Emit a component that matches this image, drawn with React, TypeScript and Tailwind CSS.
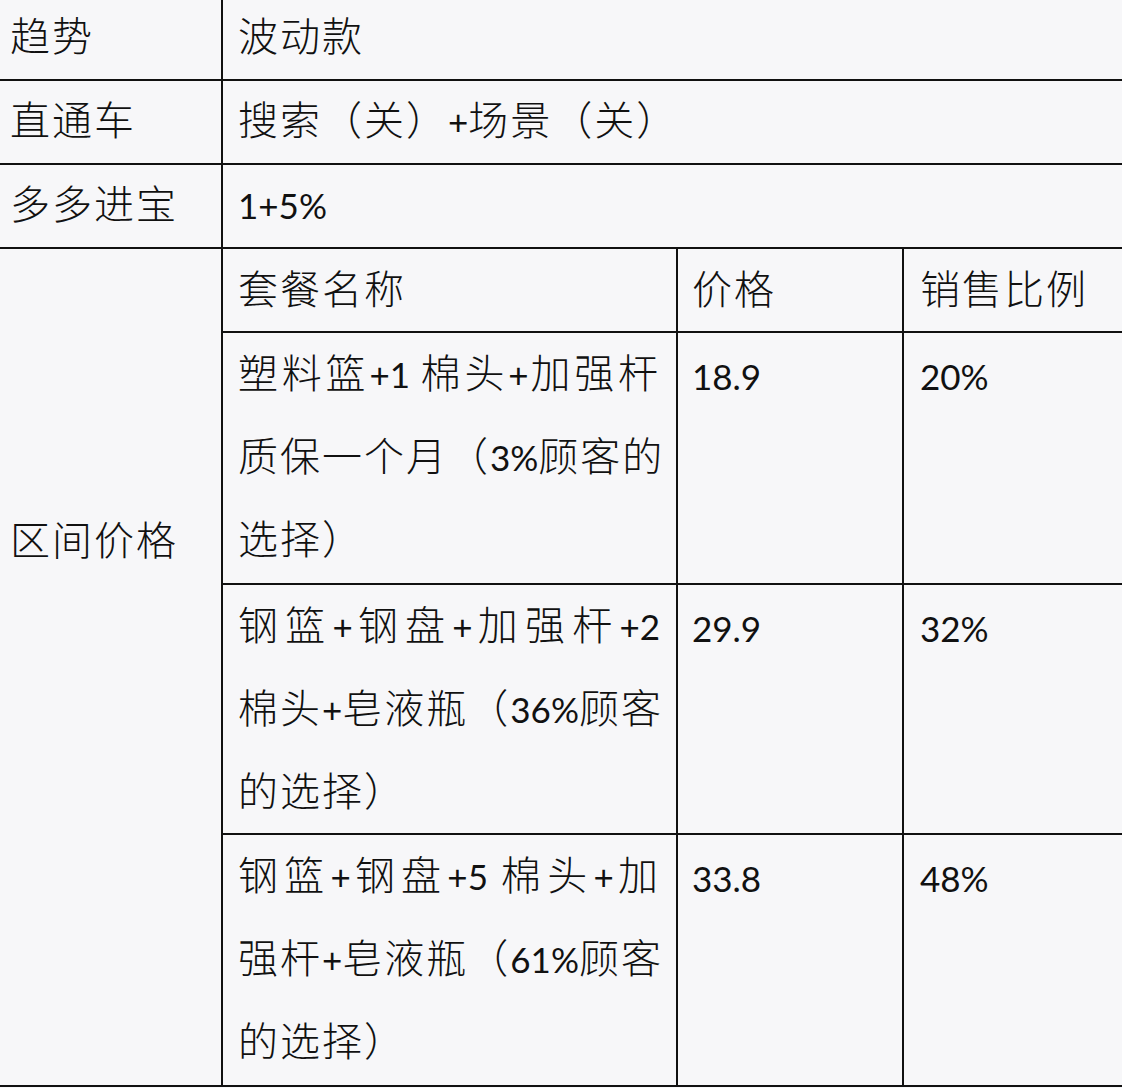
import React from 'react';

// Mixed Chinese / Latin text: Latin runs get a smaller Lato so they sit like Calibri does in Word
const CJK = /([\u3000-\u303f\u4e00-\u9fff\uff00-\uffef]+)/;

function Mixed({ text }: { text: string }) {
  const parts = text.split(CJK).filter((p) => p !== '');
  return (
    <>
      {parts.map((p, i) =>
        CJK.test(p) ? (
          <span key={i} className="tracking-[2px]">{p}</span>
        ) : (
          <span key={i} className="font-['Lato',sans-serif] text-[35px] font-normal">{p}</span>
        )
      )}
    </>
  );
}

// one cell of wrapped text; every line but the last is justified edge to edge
function Lines({ lines }: { lines: string[] }) {
  return (
    <div className="w-[422px] -mt-[3px]">
      {lines.map((l, i) => (
        <div
          key={i}
          className={`h-[83px] leading-[83px] whitespace-nowrap ${
            i < lines.length - 1 ? 'text-justify [text-align-last:justify]' : ''
          }`}
        >
          <Mixed text={l} />
        </div>
      ))}
    </div>
  );
}

const packages = [
  {
    lines: ['塑料篮+1 棉头+加强杆', '质保一个月（3%顾客的', '选择）'],
    price: '18.9',
    ratio: '20%',
  },
  {
    lines: ['钢篮+钢盘+加强杆+2', '棉头+皂液瓶（36%顾客', '的选择）'],
    price: '29.9',
    ratio: '32%',
  },
  {
    lines: ['钢篮+钢盘+5 棉头+加', '强杆+皂液瓶（61%顾客', '的选择）'],
    price: '33.8',
    ratio: '48%',
  },
];

export default function App() {
  const cell = 'bg-[#f7f7f9] overflow-hidden';

  return (
    <div className="w-[1122px] h-[1088px] bg-[#f7f7f9] overflow-hidden text-[#111] text-[40px] font-light font-['Noto_Sans_CJK_SC','Noto_Sans',sans-serif]">
      <div className="grid grid-cols-[221px_1fr] grid-rows-[79px_82px_82px_836px] gap-[2px] bg-[#111] pb-[2px]">
        <div className={`${cell} pl-[10px] leading-[68px]`}>
          <Mixed text="趋势" />
        </div>
        <div className={`${cell} pl-[15px] leading-[68px]`}>
          <Mixed text="波动款" />
        </div>

        <div className={`${cell} pl-[10px] leading-[74px]`}>
          <Mixed text="直通车" />
        </div>
        <div className={`${cell} pl-[15px] leading-[74px]`}>
          <Mixed text="搜索（关）+场景（关）" />
        </div>

        <div className={`${cell} pl-[10px] leading-[74px]`}>
          <Mixed text="多多进宝" />
        </div>
        <div className={`${cell} pl-[15px] leading-[74px]`}>
          <Mixed text="1+5%" />
        </div>

        <div className={`${cell} pl-[10px] pt-[247px] leading-[84px]`}>
          <Mixed text="区间价格" />
        </div>

        {/* nested package table */}
        <div className="grid grid-cols-[453px_224px_1fr] grid-rows-[82px_250px_248px_250px] gap-[2px] bg-[#111]">
          <div className={`${cell} pl-[15px] leading-[76px]`}>
            <Mixed text="套餐名称" />
          </div>
          <div className={`${cell} pl-[14px] leading-[76px]`}>
            <Mixed text="价格" />
          </div>
          <div className={`${cell} pl-[16px] leading-[76px]`}>
            <Mixed text="销售比例" />
          </div>

          {packages.map((p) => (
            <React.Fragment key={p.price}>
              <div className={`${cell} pl-[15px]`}>
                <Lines lines={p.lines} />
              </div>
              <div className={`${cell} pl-[14px] leading-[80px]`}>
                <Mixed text={p.price} />
              </div>
              <div className={`${cell} pl-[16px] leading-[80px]`}>
                <Mixed text={p.ratio} />
              </div>
            </React.Fragment>
          ))}
        </div>
      </div>
    </div>
  );
}
